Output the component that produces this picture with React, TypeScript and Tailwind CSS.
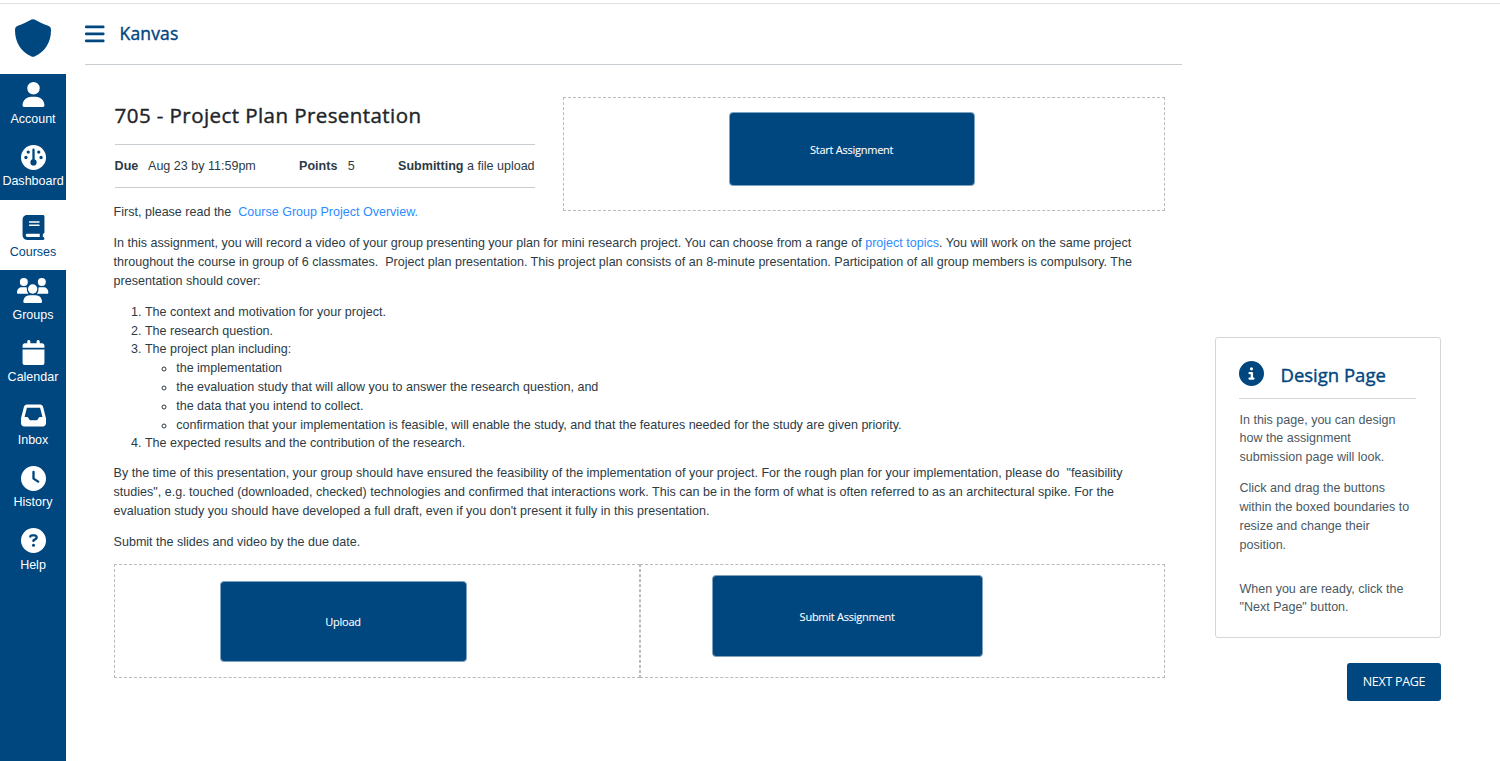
import { FaUser, FaBook, FaCalendar, FaInbox, FaClock, FaCircleQuestion, FaCircleInfo } from "react-icons/fa6";

function GaugeIcon({ className }: { className?: string }) {
  return (
    <svg viewBox="0 0 76 76" className={className}>
      <circle cx="38" cy="38" r="38" fill="#fff" />
      <g fill="#00467f">
        <circle cx="15" cy="38" r="5" />
        <circle cx="22" cy="21.500" r="5" />
        <circle cx="54" cy="21.500" r="5" />
        <circle cx="61" cy="38" r="5" />
        <circle cx="38" cy="53" r="9.500" />
        <rect x="34.500" y="11" width="7" height="42" rx="3.500" />
      </g>
    </svg>
  );
}

function GroupIcon({ className }: { className?: string }) {
  return (
    <svg viewBox="0 0 94 75" className={className} fill="currentColor">
      <circle cx="20.500" cy="12" r="12" />
      <circle cx="74.500" cy="12" r="12" />
      <circle cx="47" cy="33" r="14" />
      <path d="M15 28H27Q31 28 29.500 31Q28 40 34 47H3Q0 47 0 44C0 34 6 28 15 28Z" />
      <path d="M79 28H67Q63 28 64.500 31Q66 40 60 47H91Q94 47 94 44C94 34 88 28 79 28Z" />
      <path d="M38 51.500H56C67 51.500 75 60 75 71Q75 75 71 75H23Q19 75 19 71C19 60 27 51.500 38 51.500Z" />
    </svg>
  );
}

const nav = [
  { label: "Account", Icon: FaUser },
  { label: "Dashboard", Icon: GaugeIcon },
  { label: "Courses", Icon: FaBook, active: true },
  { label: "Groups", Icon: GroupIcon },
  { label: "Calendar", Icon: FaCalendar },
  { label: "Inbox", Icon: FaInbox },
  { label: "History", Icon: FaClock },
  { label: "Help", Icon: FaCircleQuestion },
];

function Sidebar() {
  return (
    <nav className="flex w-[66px] shrink-0 flex-col text-[12.53px] leading-[18.8px]">
      <div className="flex h-[70.300px] shrink-0 justify-center pt-[15px]">
        <svg viewBox="0 0 36 38" className="h-[38px] w-9 fill-[#00467f]">
          <path d="M16.500.500Q18-.200 19.500.500C24 3.200 28.500 5 33.200 6.700Q36 7.800 36 11C36 23 30.500 32.500 20 37.200Q18 38.300 16 37.200C5.500 32.500 0 23 0 11Q0 7.800 2.800 6.700C7.500 5 12 3.200 16.500.500Z" />
        </svg>
      </div>
      {nav.map(({ label, Icon, active }) => (
        <div
          key={label}
          className={
            active
              ? "flex h-[70.600px] shrink-0 flex-col items-center bg-white pt-[15.500px] text-[#00467f]"
              : "flex h-[62.650px] shrink-0 flex-col items-center bg-[#00467f] pt-[7.600px] text-white"
          }
        >
          <Icon className="h-[25px] w-auto" />
          <span className="mt-[2.800px]">{label}</span>
        </div>
      ))}
      <div className="grow bg-[#00467f]" />
    </nav>
  );
}

function DesignButton({ label, className }: { label: string; className: string }) {
  return (
    <button
      className={
        "absolute flex items-center justify-center rounded-[4px] border border-[#7fa2bf] bg-[#00467f] font-['Open_Sans',sans-serif] text-[11px] tracking-[-0.250px] text-white [-webkit-text-stroke:0.100px] " +
        className
      }
    >
      {label}
    </button>
  );
}

function Assignment() {
  return (
    <main className="w-[1051px] text-[12.540px] leading-[18.790px] text-[#2d3b45]">
      <div className="flex">
        <div className="w-[421px]">
          <h1 className="mt-[4px] ml-px font-['Open_Sans',sans-serif] text-[20.500px] leading-[28px] font-medium tracking-[0.430px] whitespace-nowrap text-[#212529] [-webkit-text-stroke:0.400px]">
            705 - Project Plan Presentation
          </h1>
          <div className="mt-[15px] ml-px flex h-11 items-center justify-between border-y border-[#c7cdd1] whitespace-pre">
            <span><b>Due</b>   Aug 23 by 11:59pm</span>
            <span><b>Points</b>   5</span>
            <span><b>Submitting</b> a file upload</span>
          </div>
          <p className="mt-[15px] whitespace-pre">
            First, please read the  <a className="text-[#2d8cff]">Course Group Project Overview.</a>
          </p>
        </div>
        <div className="relative ml-[28px] h-[114px] w-[602px] border border-dashed border-[#bbb]">
          <DesignButton label="Start Assignment" className="top-[14px] left-[165px] h-[74px] w-[246px] pt-[2px]" />
        </div>
      </div>
      <p className="mt-[12.200px] whitespace-pre">
        In this assignment, you will record a video of your group presenting your plan for mini research project. You can choose from a range of <a className="text-[#2d8cff]">project topics</a>. You will work on the same project{"\n"}
        throughout the course in group of 6 classmates.  Project plan presentation. This project plan consists of an 8-minute presentation. Participation of all group members is compulsory. The{"\n"}
        presentation should cover:
      </p>
      <ol className="mt-[12.500px] list-decimal pl-[31.300px]">
        <li>The context and motivation for your project.</li>
        <li>The research question.</li>
        <li>
          The project plan including:
          <ul className="list-[circle] pl-[31.300px]">
            <li>the implementation</li>
            <li>the evaluation study that will allow you to answer the research question, and</li>
            <li>the data that you intend to collect.</li>
            <li>confirmation that your implementation is feasible, will enable the study, and that the features needed for the study are given priority.</li>
          </ul>
        </li>
        <li>The expected results and the contribution of the research.</li>
      </ol>
      <p className="mt-[11px] whitespace-pre">
        By the time of this presentation, your group should have ensured the feasibility of the implementation of your project. For the rough plan for your implementation, please do  "feasibility{"\n"}
        studies", e.g. touched (downloaded, checked) technologies and confirmed that interactions work. This can be in the form of what is often referred to as an architectural spike. For the{"\n"}
        evaluation study you should have developed a full draft, even if you don't present it fully in this presentation.
      </p>
      <p className="mt-[12.500px]">Submit the slides and video by the due date.</p>
      <div className="mt-[12px] flex">
        <div className="relative h-[114px] w-[526px] border border-dashed border-[#bbb]">
          <DesignButton label="Upload" className="top-[16px] left-[105px] h-[81px] w-[247px] pt-px" />
        </div>
        <div className="relative h-[114px] w-[525px] border border-dashed border-[#bbb]">
          <DesignButton label="Submit Assignment" className="top-[10px] left-[71px] h-[82px] w-[271px] pt-[3px]" />
        </div>
      </div>
    </main>
  );
}

function InfoPanel() {
  return (
    <aside className="mt-[332.500px] ml-[33px] flex w-[226px] flex-col items-end">
      <div className="h-[301px] w-full rounded-[3px] border border-[#d3d7da] px-[23.500px] pt-[23px] text-[12.530px] leading-[18.790px] text-[#4b5862]">
        <div className="flex h-[38.500px] border-b border-[#d3d7da] text-[#00467f]">
          <FaCircleInfo className="h-[25px] w-[25px]" />
          <h2 className="ml-4 font-['Open_Sans',sans-serif] text-[18.500px] leading-[28px] font-medium whitespace-nowrap [-webkit-text-stroke:0.400px]">
            Design Page
          </h2>
        </div>
        <p className="mt-[11.500px]">In this page, you can design<br />how the assignment<br />submission page will look.</p>
        <p className="mt-[12.500px]">Click and drag the buttons<br />within the boxed boundaries to<br />resize and change their<br />position.</p>
        <p className="mt-[25px]">When you are ready, click the<br />"Next Page" button.</p>
      </div>
      <button className="mt-[25px] h-[38px] w-[94px] rounded-[3px] bg-[#00467f] pt-px font-['Open_Sans',sans-serif] text-[12.500px] tracking-[-0.300px] text-white">
        NEXT PAGE
      </button>
    </aside>
  );
}

export default function App() {
  return (
    <div className="h-[761px] w-[1500px] overflow-hidden bg-white pt-[3px] font-['Liberation_Sans',Arial,sans-serif]">
      <div className="flex h-[758px] border-t border-[#dee2e6]">
        <Sidebar />
        <div className="ml-[18.600px] flex w-[1097.400px] shrink-0 flex-col">
          <header className="flex h-[61px] items-start border-b border-[#c7cdd1] text-[#00467f]">
            <svg viewBox="0 0 20 18" className="mt-[21px] h-[18px] w-5 fill-current">
              <rect y="0.500" width="19.500" height="2.700" rx="1" />
              <rect y="7.500" width="19.500" height="2.700" rx="1" />
              <rect y="14.500" width="19.500" height="2.700" rx="1" />
            </svg>
            <span className="mt-[15px] ml-[15px] font-['Open_Sans',sans-serif] text-[17.500px] leading-[28px] font-medium tracking-[0.150px] [-webkit-text-stroke:0.400px]">Kanvas</span>
          </header>
          <div className="mt-8 ml-[29px]">
            <Assignment />
          </div>
        </div>
        <InfoPanel />
      </div>
    </div>
  );
}
